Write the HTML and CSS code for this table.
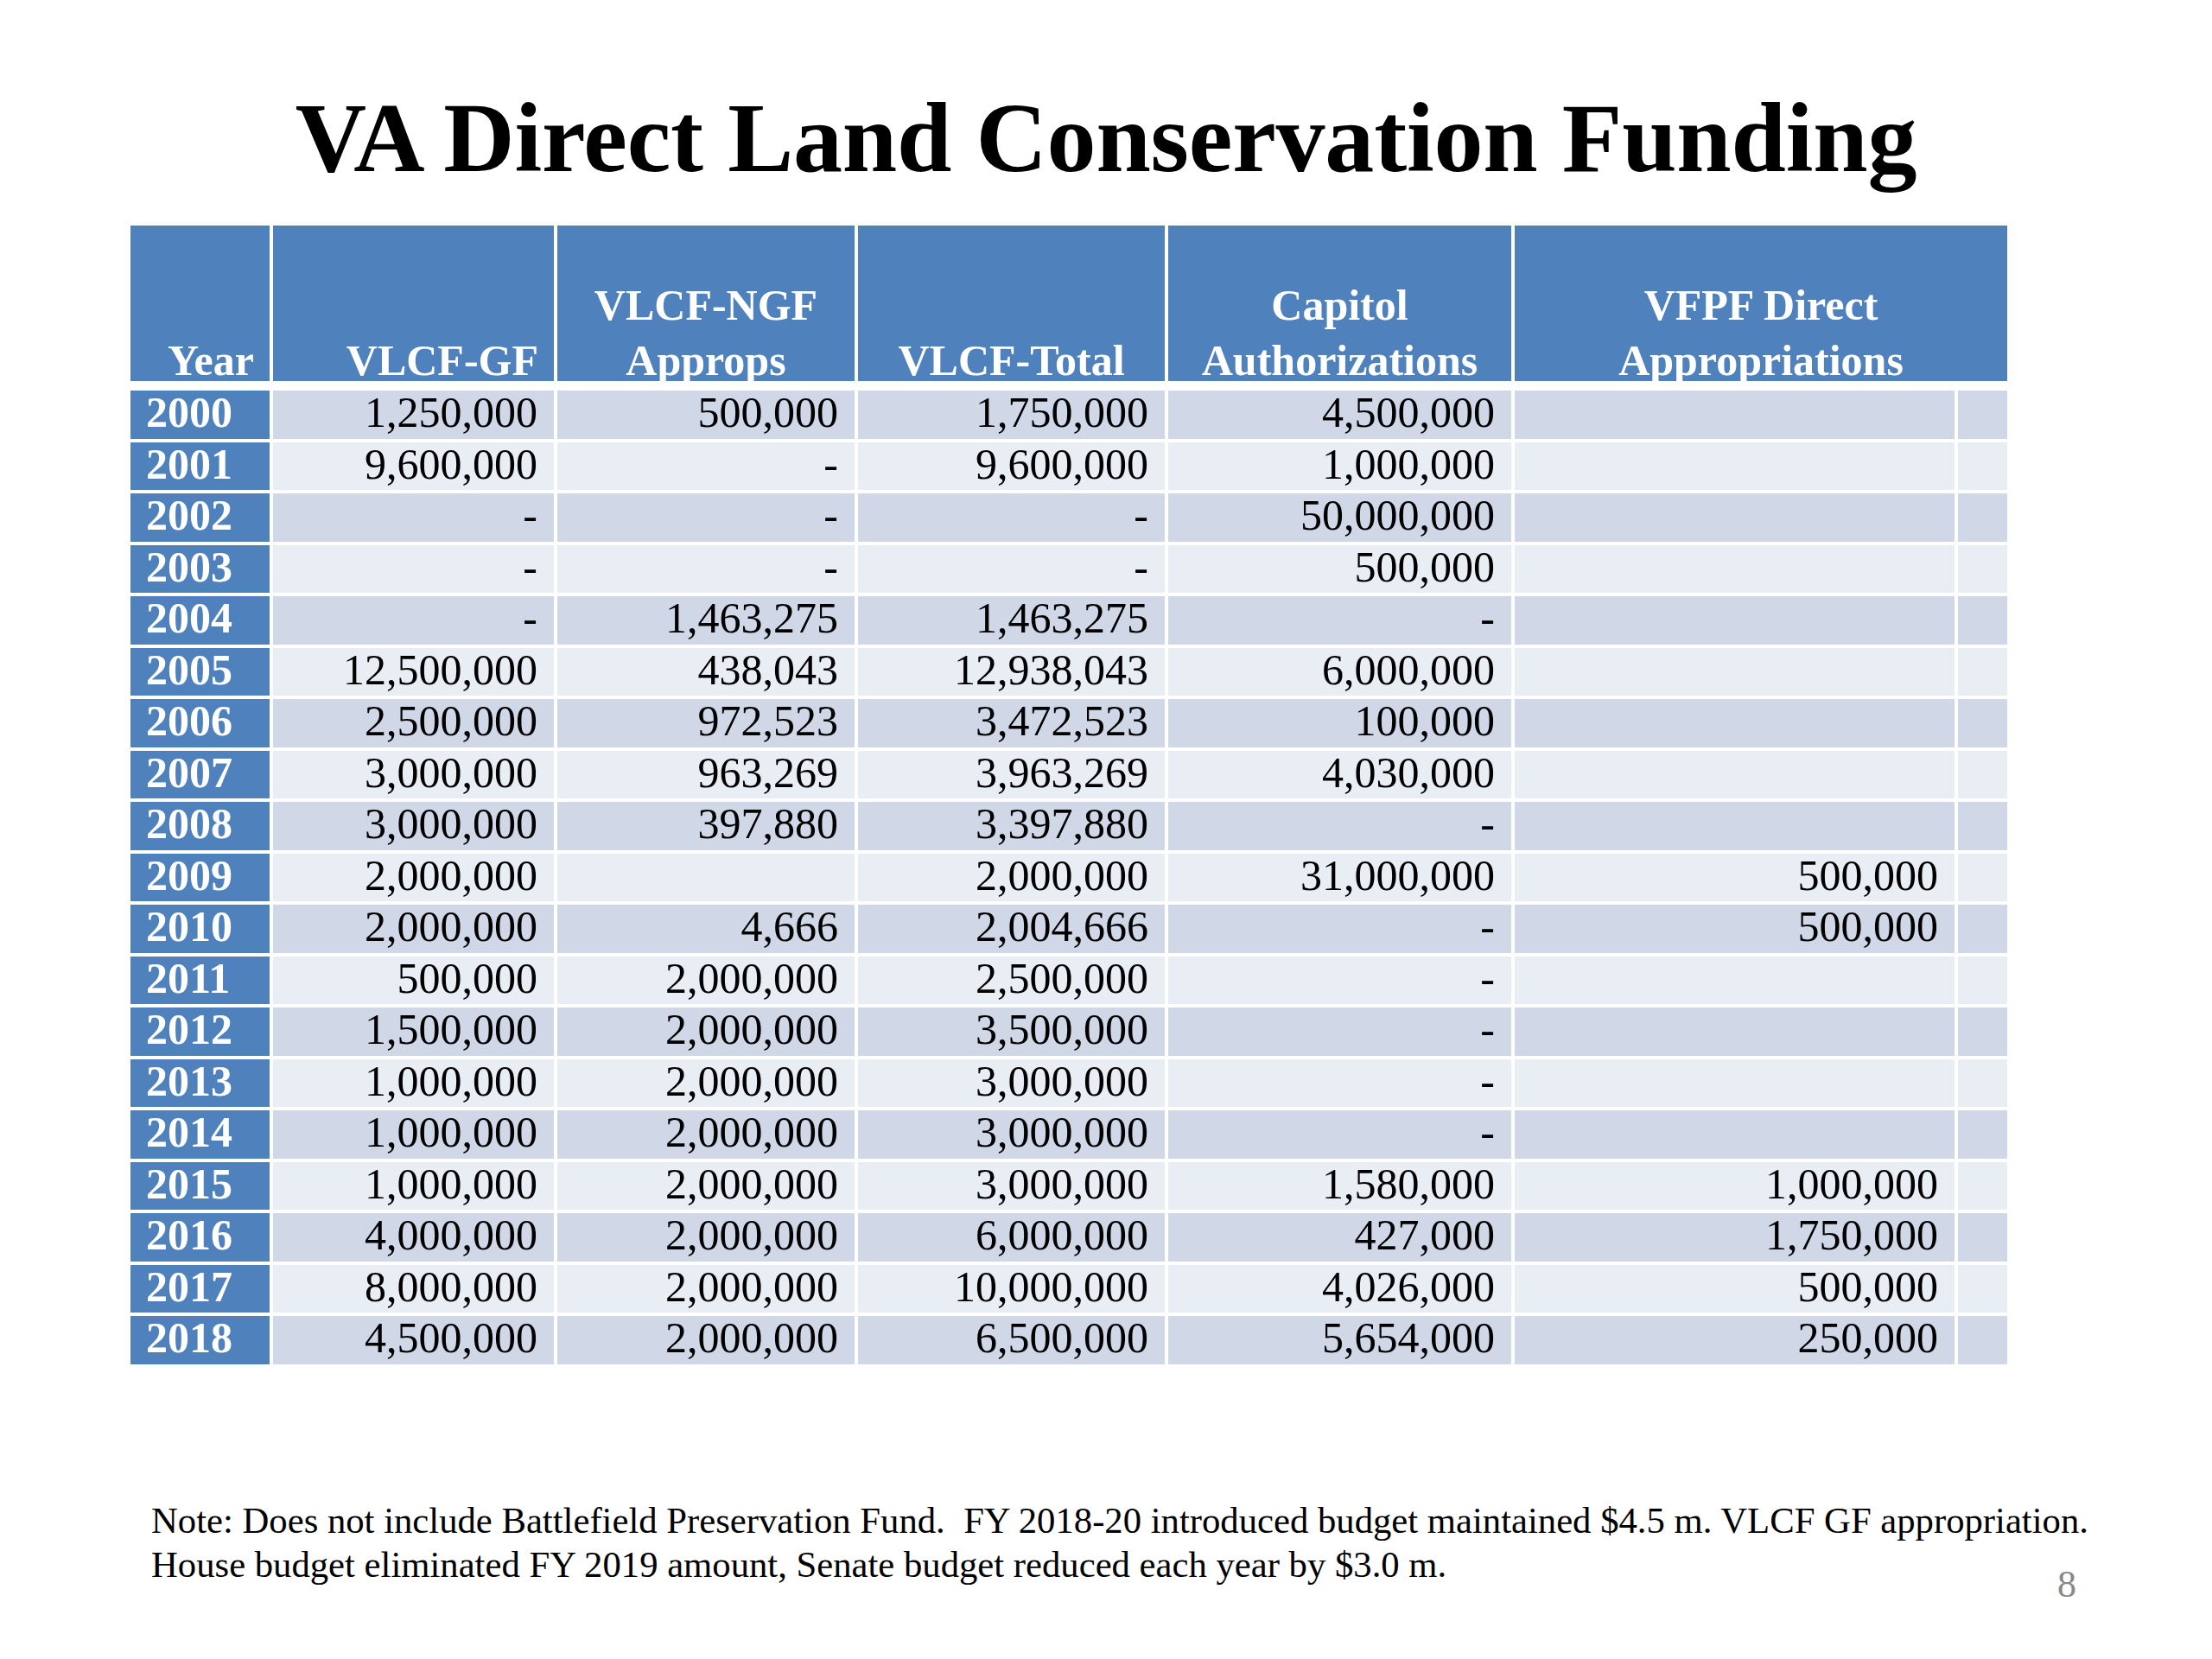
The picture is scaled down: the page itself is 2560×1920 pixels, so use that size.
FILE: index.html
```html
<!DOCTYPE html>
<html lang="en">
<head>
<meta charset="utf-8">
<title>VA Direct Land Conservation Funding</title>
<link rel="stylesheet" href="styles.css">
</head>
<body>
<div class="slide">
  <h1 class="title">VA Direct Land Conservation Funding</h1>
  <div class="tbl">
    <div class="th right"><span class="ht">Year</span></div>
    <div class="th right"><span class="ht">VLCF-GF</span></div>
    <div class="th"><span class="ht">VLCF-NGF<br>Approps</span></div>
    <div class="th"><span class="ht">VLCF-Total</span></div>
    <div class="th"><span class="ht">Capitol<br>Authorizations</span></div>
    <div class="th span2"><span class="ht">VFPF Direct<br>Appropriations</span></div>

    <div class="yr">2000</div><div class="c d">1,250,000</div><div class="c d">500,000</div><div class="c d">1,750,000</div><div class="c d">4,500,000</div><div class="c d"></div><div class="c d"></div>
    <div class="yr">2001</div><div class="c l">9,600,000</div><div class="c l">-</div><div class="c l">9,600,000</div><div class="c l">1,000,000</div><div class="c l"></div><div class="c l"></div>
    <div class="yr">2002</div><div class="c d">-</div><div class="c d">-</div><div class="c d">-</div><div class="c d">50,000,000</div><div class="c d"></div><div class="c d"></div>
    <div class="yr">2003</div><div class="c l">-</div><div class="c l">-</div><div class="c l">-</div><div class="c l">500,000</div><div class="c l"></div><div class="c l"></div>
    <div class="yr">2004</div><div class="c d">-</div><div class="c d">1,463,275</div><div class="c d">1,463,275</div><div class="c d">-</div><div class="c d"></div><div class="c d"></div>
    <div class="yr">2005</div><div class="c l">12,500,000</div><div class="c l">438,043</div><div class="c l">12,938,043</div><div class="c l">6,000,000</div><div class="c l"></div><div class="c l"></div>
    <div class="yr">2006</div><div class="c d">2,500,000</div><div class="c d">972,523</div><div class="c d">3,472,523</div><div class="c d">100,000</div><div class="c d"></div><div class="c d"></div>
    <div class="yr">2007</div><div class="c l">3,000,000</div><div class="c l">963,269</div><div class="c l">3,963,269</div><div class="c l">4,030,000</div><div class="c l"></div><div class="c l"></div>
    <div class="yr">2008</div><div class="c d">3,000,000</div><div class="c d">397,880</div><div class="c d">3,397,880</div><div class="c d">-</div><div class="c d"></div><div class="c d"></div>
    <div class="yr">2009</div><div class="c l">2,000,000</div><div class="c l"></div><div class="c l">2,000,000</div><div class="c l">31,000,000</div><div class="c l">500,000</div><div class="c l"></div>
    <div class="yr">2010</div><div class="c d">2,000,000</div><div class="c d">4,666</div><div class="c d">2,004,666</div><div class="c d">-</div><div class="c d">500,000</div><div class="c d"></div>
    <div class="yr">2011</div><div class="c l">500,000</div><div class="c l">2,000,000</div><div class="c l">2,500,000</div><div class="c l">-</div><div class="c l"></div><div class="c l"></div>
    <div class="yr">2012</div><div class="c d">1,500,000</div><div class="c d">2,000,000</div><div class="c d">3,500,000</div><div class="c d">-</div><div class="c d"></div><div class="c d"></div>
    <div class="yr">2013</div><div class="c l">1,000,000</div><div class="c l">2,000,000</div><div class="c l">3,000,000</div><div class="c l">-</div><div class="c l"></div><div class="c l"></div>
    <div class="yr">2014</div><div class="c d">1,000,000</div><div class="c d">2,000,000</div><div class="c d">3,000,000</div><div class="c d">-</div><div class="c d"></div><div class="c d"></div>
    <div class="yr">2015</div><div class="c l">1,000,000</div><div class="c l">2,000,000</div><div class="c l">3,000,000</div><div class="c l">1,580,000</div><div class="c l">1,000,000</div><div class="c l"></div>
    <div class="yr">2016</div><div class="c d">4,000,000</div><div class="c d">2,000,000</div><div class="c d">6,000,000</div><div class="c d">427,000</div><div class="c d">1,750,000</div><div class="c d"></div>
    <div class="yr">2017</div><div class="c l">8,000,000</div><div class="c l">2,000,000</div><div class="c l">10,000,000</div><div class="c l">4,026,000</div><div class="c l">500,000</div><div class="c l"></div>
    <div class="yr">2018</div><div class="c d">4,500,000</div><div class="c d">2,000,000</div><div class="c d">6,500,000</div><div class="c d">5,654,000</div><div class="c d">250,000</div><div class="c d"></div>
  </div>
  <div class="footer">
    <p class="note">Note: Does not include Battlefield Preservation Fund.&nbsp; FY 2018-20 introduced budget maintained $4.5 m. VLCF GF appropriation.<br>House budget eliminated FY 2019 amount, Senate budget reduced each year by $3.0 m.</p>
    <span class="pageno">8</span>
  </div>
</div>
</body>
</html>
```
FILE: styles.css
```css
html, body {
  margin: 0;
  padding: 0;
  background: #ffffff;
}
.slide {
  width: 2560px;
  height: 1920px;
  font-family: "Liberation Serif", "Times New Roman", serif;
  color: #000;
  overflow: hidden;
}
.title {
  margin: 102px 0 0 0;
  text-align: center;
  font-size: 114px;
  line-height: 116px;
  font-weight: bold;
  letter-spacing: -0.2px;
}
.tbl {
  margin: 43px 0 0 151px;
  width: 2172px;
  display: grid;
  grid-template-columns: 161px 325px 344px 355px 397px 509px 57px;
  grid-template-rows: 187px repeat(19, 55.5px);
  column-gap: 4px;
  row-gap: 4px;
  font-size: 50px;
}
.th {
  height: 180px;
  background: #4f81bd;
  color: #fff;
  font-weight: bold;
  display: flex;
  flex-direction: column;
  justify-content: flex-end;
  align-items: center;
  text-align: center;
  padding: 0 18px;
  box-sizing: border-box;
}
.th.right {
  align-items: flex-end;
  text-align: right;
}
.th.span2 {
  grid-column: span 2;
}
.ht {
  display: block;
  line-height: 64px;
  margin-bottom: -8px;
  white-space: nowrap;
}
.yr {
  background: #4f81bd;
  color: #fff;
  font-weight: bold;
  line-height: 51px;
  padding-left: 18px;
}
.c {
  text-align: right;
  line-height: 51px;
  padding-right: 19px;
  white-space: nowrap;
}
.d {
  background: #d0d8e8;
}
.l {
  background: #e9edf4;
}
.footer {
  margin-top: 155px;
  padding: 0 157px 0 175px;
  display: grid;
  grid-template-columns: minmax(0, 1fr);
}
.note {
  grid-area: 1 / 1;
  justify-self: start;
  margin: 0;
  font-size: 42.7px;
  line-height: 51px;
  white-space: nowrap;
}
.pageno {
  grid-area: 1 / 1;
  justify-self: end;
  align-self: end;
  font-size: 44px;
  line-height: 51px;
  color: #898989;
  margin-bottom: -23px;
}
```
